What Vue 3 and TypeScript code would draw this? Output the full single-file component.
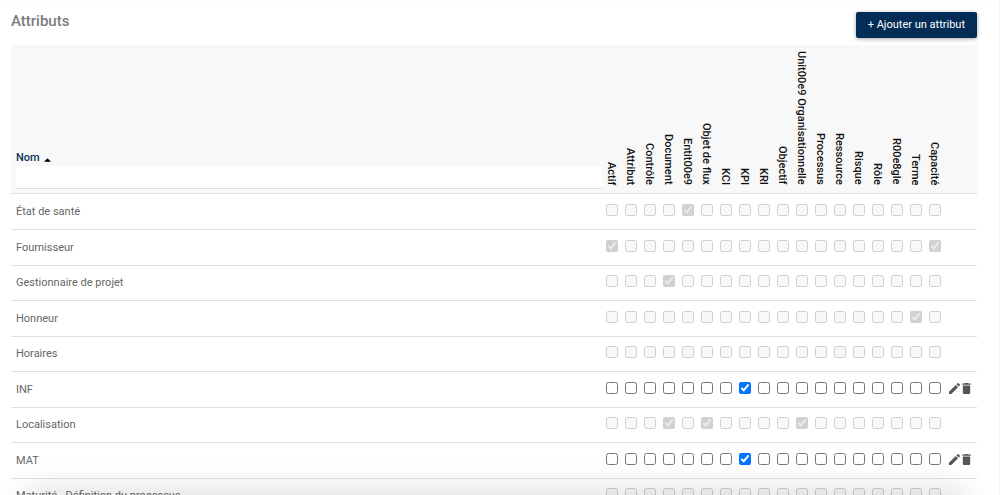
<script setup lang="ts">
import { ref } from 'vue'

interface Row {
  name: string
  editable: boolean
  types: string[]
}

const columns: string[] = [
  'Actif', 'Attribut', 'Contrôle', 'Document', 'Entit00e9', 'Objet de flux',
  'KCI', 'KPI', 'KRI', 'Objectif', 'Unit00e9 Organisationnelle', 'Processus',
  'Ressource', 'Risque', 'Rôle', 'R00e8gle', 'Terme', 'Capacité',
]

const filter = ref('')

const rows = ref<Row[]>([
  { name: 'État de santé', editable: false, types: ['Entit00e9'] },
  { name: 'Fournisseur', editable: false, types: ['Actif', 'Capacité'] },
  { name: 'Gestionnaire de projet', editable: false, types: ['Document'] },
  { name: 'Honneur', editable: false, types: ['Terme'] },
  { name: 'Horaires', editable: false, types: [] },
  { name: 'INF', editable: true, types: ['KPI'] },
  { name: 'Localisation', editable: false, types: ['Document', 'Objet de flux', 'Unit00e9 Organisationnelle'] },
  { name: 'MAT', editable: true, types: ['KPI'] },
  { name: 'Maturité - Définition du processus', editable: false, types: [] },
])
</script>

<template>
  <main class="page">
    <header class="bar">
      <h1>Attributs</h1>
      <button type="button" class="add">+ Ajouter un attribut</button>
    </header>
    <table>
      <colgroup>
        <col />
        <col v-for="c in columns" :key="c" class="type-col" />
        <col class="action-col" />
      </colgroup>
      <thead>
        <tr>
          <th class="name-head" scope="col">
            <button type="button" class="sort">
              Nom
              <svg viewBox="0 0 8 4" width="7" height="4" aria-hidden="true"><path d="M0 4L4 0L8 4Z" /></svg>
            </button>
            <input v-model="filter" type="text" class="filter" aria-label="Nom" />
          </th>
          <th v-for="c in columns" :key="c" class="type-head" scope="col"><span>{{ c }}</span></th>
          <td></td>
        </tr>
      </thead>
      <tbody>
        <tr v-for="row in rows" :key="row.name">
          <td class="name">{{ row.name }}</td>
          <td v-for="c in columns" :key="c" class="tick">
            <input v-model="row.types" type="checkbox" :value="c" :disabled="!row.editable" :aria-label="row.name + ', ' + c" />
          </td>
          <td class="actions">
            <div v-if="row.editable" class="icons">
              <button type="button" aria-label="Modifier">
                <svg viewBox="3 3 18 18" width="11" height="11" aria-hidden="true">
                  <path d="M3 17.25V21h3.75L17.81 9.94l-3.75-3.75L3 17.25zM20.71 7.04a1 1 0 0 0 0-1.41l-2.34-2.34a1 1 0 0 0-1.41 0l-1.83 1.83 3.75 3.75 1.83-1.83z" />
                </svg>
              </button>
              <button type="button" aria-label="Supprimer">
                <svg viewBox="5 3 14 18" width="9" height="11" aria-hidden="true">
                  <path d="M6 19c0 1.1.9 2 2 2h8c1.1 0 2-.9 2-2V7H6v12zM19 4h-3.500l-1-1h-5l-1 1H5v2h14V4z" />
                </svg>
              </button>
            </div>
          </td>
        </tr>
      </tbody>
    </table>
    <div class="bottom-shade"></div>
  </main>
</template>

<style>
html,
body {
  height: 100%;
  overflow: hidden;
  background: #fff;
}
</style>

<style scoped>
.page {
  box-sizing: border-box;
  height: 100vh;
  overflow: hidden;
  padding: 11px 22px 0 11px;
  border-top: 1px solid #fafafa;
  border-right: 1px solid #f2f2f2;
  font-family: Roboto, sans-serif;
  font-size: 11px;
  line-height: 16px;
  color: #666;
}

.bar {
  display: flex;
  justify-content: space-between;
  align-items: flex-start;
  height: 33px;
}

h1 {
  margin: 0;
  font-size: 15px;
  line-height: 18px;
  font-weight: 500;
  color: #7b7b7b;
}

button {
  border: 0;
  padding: 0;
  background: none;
  font: inherit;
  color: inherit;
  cursor: pointer;
}

.add {
  height: 26px;
  padding: 0 12px;
  border-radius: 2px;
  background: #032d57;
  color: #fff;
  white-space: nowrap;
  box-shadow: 0 1px 4px rgba(0, 0, 0, 0.35);
}

table {
  width: 100%;
  table-layout: fixed;
  border-collapse: separate;
  border-spacing: 0;
}

.type-col {
  width: 19px;
}

.action-col {
  width: 33px;
}

th,
td {
  padding: 0;
  text-align: left;
  border-bottom: 1px solid #e0e0e0;
}

thead tr {
  background: #f8f8f8;
}

thead th {
  box-sizing: border-box;
  height: 149px;
  vertical-align: bottom;
  font-weight: 500;
}

.name-head {
  padding: 0 0 4px 5px;
}

.sort {
  display: flex;
  align-items: center;
  gap: 4px;
  color: #0b3259;
}

.sort svg {
  margin-top: 4px;
  fill: #000;
}

.filter {
  display: block;
  box-sizing: border-box;
  width: 100%;
  height: 23px;
  border: 0;
  border-bottom: 1px solid #dcdcdc;
  background: #fff;
  font: inherit;
  outline: 0;
}

.type-head {
  padding-bottom: 8px;
  color: #111;
}

.type-head span {
  display: block;
  width: 19px;
  line-height: 19px;
  writing-mode: vertical-rl;
  text-align: right;
  white-space: nowrap;
}

tbody td {
  box-sizing: border-box;
  height: 36px;
  vertical-align: middle;
}

tbody tr:nth-child(2n + 3) td {
  height: 35px;
}

.name {
  padding-left: 5px;
}

.tick {
  text-align: center;
}

.tick input {
  display: block;
  width: 12px;
  height: 12px;
  margin: 0 auto 4px;
}

.icons {
  display: flex;
  align-items: center;
  gap: 2px;
  padding: 0 0 2px 5px;
}

.icons button {
  display: flex;
}

.icons svg {
  fill: #555;
}

.bottom-shade {
  position: fixed;
  left: 32px;
  right: 40px;
  bottom: -20px;
  height: 20px;
  box-shadow: 0 0 32px 6px rgba(0, 0, 0, 0.13);
  pointer-events: none;
}
</style>
